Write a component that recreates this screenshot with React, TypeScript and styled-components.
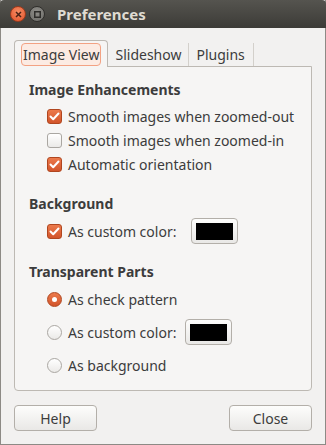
import styled, { createGlobalStyle } from 'styled-components'

const GlobalStyle = createGlobalStyle`
  html, body {
    margin: 0;
    padding: 0;
    background: #f2f1f0;
  }
  body {
    font-family: "Noto Sans", "DejaVu Sans", sans-serif;
    font-size: 14px;
    color: #3c3c3c;
  }
`

const Window = styled.div`
  width: 326px;
  height: 445px;
  box-sizing: border-box;
  display: flex;
  flex-direction: column;
  background: #f2f1f0;
  border: 1px solid #8d8a85;
  border-top: none;
`

const TitleBar = styled.div`
  height: 28px;
  flex: none;
  display: flex;
  align-items: center;
  padding-left: 10px;
  margin: 0 -1px;
  background: linear-gradient(#55544f, #3c3b37);
  border-radius: 4px 4px 0 0;
`

const WinButton = styled.div<{ $close?: boolean }>`
  width: 16px;
  height: 16px;
  border-radius: 50%;
  margin-right: 3px;
  box-sizing: border-box;
  display: flex;
  align-items: center;
  justify-content: center;
  background: ${p => p.$close
    ? 'radial-gradient(circle at 50% 35%, #f78c63, #e2522a)'
    : 'radial-gradient(circle at 50% 35%, #8e8d88, #6d6c68)'};
  border: 1px solid ${p => p.$close ? '#9c3a1c' : '#2f2e2b'};
`

const Title = styled.div`
  margin-left: 9px;
  font-weight: bold;
  font-size: 15px;
  color: #dfdbd2;
`

const Body = styled.div`
  flex: 1;
  display: flex;
  flex-direction: column;
  padding: 12px 13px 13px;
`

const TabRow = styled.div`
  display: flex;
  height: 26px;
  align-items: stretch;
`

const Tab = styled.div<{ $active?: boolean }>`
  display: flex;
  align-items: center;
  box-sizing: border-box;
  padding: 0 7px;
  border-right: 1px solid #d3d0cb;
  margin-top: 3px;
  ${p => p.$active && `
    padding: 0 6px;
    margin-top: 0;
    border: 1px solid #bdb9b3;
    border-bottom: none;
    border-radius: 4px 4px 0 0;
    background: #f6f5f4;
    margin-bottom: -1px;
    position: relative;
    z-index: 1;
  `}
  &:last-child {
    padding-right: 8px;
  }
`

const TabLabel = styled.span<{ $focus?: boolean }>`
  line-height: 19px;
  ${p => p.$focus && `
    padding: 1px 1px;
    border: 1px solid #f3a283;
    border-radius: 4px;
    background: #fcebe3;
  `}
`

const Panel = styled.div`
  border: 1px solid #bdb9b3;
  border-radius: 0 0 4px 4px;
  background: #f6f5f4;
  padding: 14px 14px 12px;
  display: flex;
  flex-direction: column;
  gap: 19px;
`

const Section = styled.div`
  display: flex;
  flex-direction: column;
  gap: 5px;
`

const Heading = styled.div`
  font-weight: bold;
  line-height: 18px;
`

const Rows = styled.div<{ $gap?: number }>`
  display: flex;
  flex-direction: column;
  gap: ${p => p.$gap ?? 0}px;
  padding-left: 18px;
`

const Row = styled.div<{ $h?: number }>`
  display: flex;
  align-items: center;
  height: ${p => p.$h ?? 24}px;
`

const CheckBox = styled.span<{ $on?: boolean }>`
  width: 15px;
  height: 15px;
  box-sizing: border-box;
  border-radius: 3px;
  margin-right: 6px;
  display: inline-flex;
  align-items: center;
  justify-content: center;
  flex: none;
  border: 1px solid ${p => p.$on ? '#b0461f' : '#aaa7a2'};
  background: ${p => p.$on
    ? 'linear-gradient(#ec7a4c, #d2542a)'
    : 'linear-gradient(#ffffff, #ebeae8)'};
`

const Radio = styled.span<{ $on?: boolean }>`
  width: 15px;
  height: 15px;
  box-sizing: border-box;
  border-radius: 50%;
  margin-right: 6px;
  display: inline-flex;
  align-items: center;
  justify-content: center;
  flex: none;
  border: 1px solid ${p => p.$on ? '#b0461f' : '#aaa7a2'};
  background: ${p => p.$on
    ? 'linear-gradient(#ec7a4c, #d2542a)'
    : 'linear-gradient(#ffffff, #ebeae8)'};
`

const Dot = styled.span`
  width: 5px;
  height: 5px;
  border-radius: 50%;
  background: #fff;
`

const ColorButton = styled.div<{ $offset: number }>`
  margin-left: ${p => p.$offset}px;
  width: 47px;
  height: 26px;
  box-sizing: border-box;
  border: 1px solid #b3afa9;
  border-radius: 4px;
  background: linear-gradient(#fdfdfc, #e9e8e6);
  padding: 4px 4px 3px;
  display: flex;
`

const Swatch = styled.div`
  flex: 1;
  background: #000;
`

const Footer = styled.div`
  display: flex;
  justify-content: space-between;
  margin-top: 14px;
`

const Button = styled.button`
  width: 83px;
  height: 26px;
  font: inherit;
  color: #3c3c3c;
  border: 1px solid #b3afa9;
  border-radius: 4px;
  background: linear-gradient(#fdfdfc, #e9e8e6);
  padding: 0;
`

const Check = () => (
  <svg width="11" height="9" viewBox="0 0 11 9">
    <path d="M1.5 4.5 L4.2 7.2 L9.5 1.5" fill="none" stroke="#fff" strokeWidth="2" strokeLinecap="round" strokeLinejoin="round" />
  </svg>
)

export default function App() {
  return (
    <>
      <GlobalStyle />
      <Window>
        <TitleBar>
          <WinButton $close>
            <svg width="7" height="7" viewBox="0 0 7 7">
              <path d="M1 1 L6 6 M6 1 L1 6" stroke="#4a2216" strokeWidth="1.5" />
            </svg>
          </WinButton>
          <WinButton>
            <svg width="7" height="7" viewBox="0 0 7 7">
              <rect x="0.75" y="0.75" width="5.5" height="5.5" fill="none" stroke="#2e2d2a" strokeWidth="1.5" />
            </svg>
          </WinButton>
          <Title>Preferences</Title>
        </TitleBar>
        <Body>
          <TabRow>
            <Tab $active><TabLabel $focus>Image View</TabLabel></Tab>
            <Tab><TabLabel>Slideshow</TabLabel></Tab>
            <Tab><TabLabel>Plugins</TabLabel></Tab>
          </TabRow>
          <Panel>
            <Section>
              <Heading>Image Enhancements</Heading>
              <Rows>
                <Row><CheckBox $on><Check /></CheckBox>Smooth images when zoomed-out</Row>
                <Row><CheckBox />Smooth images when zoomed-in</Row>
                <Row><CheckBox $on><Check /></CheckBox>Automatic orientation</Row>
              </Rows>
            </Section>
            <Section>
              <Heading>Background</Heading>
              <Rows>
                <Row $h={26}>
                  <CheckBox $on><Check /></CheckBox>As custom color:
                  <ColorButton $offset={15}><Swatch /></ColorButton>
                </Row>
              </Rows>
            </Section>
            <Section>
              <Heading>Transparent Parts</Heading>
              <Rows $gap={7}>
                <Row $h={26}><Radio $on><Dot /></Radio>As check pattern</Row>
                <Row $h={26}>
                  <Radio />As custom color:
                  <ColorButton $offset={9}><Swatch /></ColorButton>
                </Row>
                <Row $h={26}><Radio />As background</Row>
              </Rows>
            </Section>
          </Panel>
          <Footer>
            <Button>Help</Button>
            <Button>Close</Button>
          </Footer>
        </Body>
      </Window>
    </>
  )
}
